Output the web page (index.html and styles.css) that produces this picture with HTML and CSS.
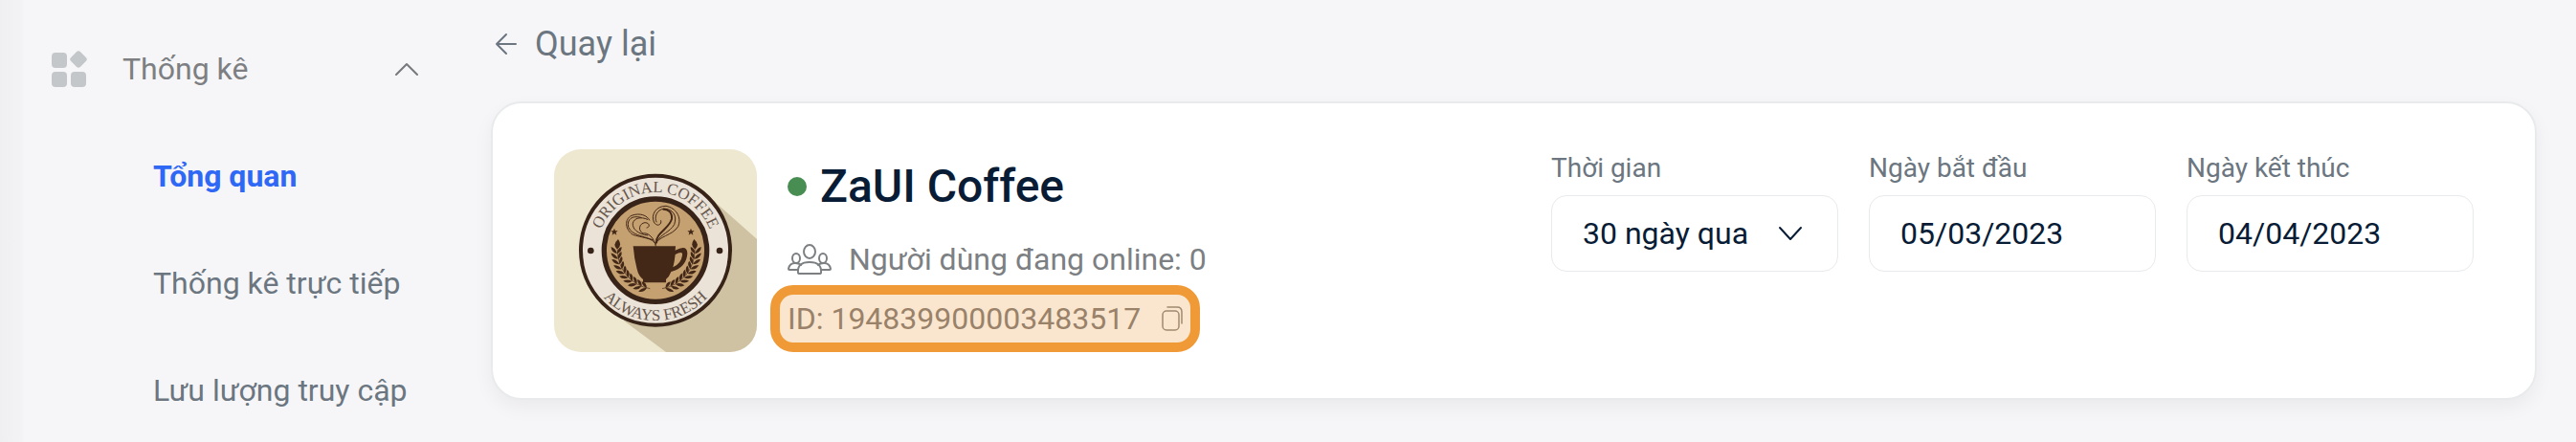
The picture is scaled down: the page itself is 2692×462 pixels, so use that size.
FILE: index.html
```html
<!DOCTYPE html>
<html lang="vi">
<head>
    <meta charset="UTF-8">
    <meta name="viewport" content="width=device-width, initial-scale=1.0">
    <title>ZaUI Coffee - Tổng quan</title>
    <link rel="stylesheet" href="styles.css">
</head>
<body>

    <!-- Sidebar -->
    <nav class="sidebar">
        <button type="button" class="menu-toggle" aria-expanded="true">
            <svg class="menu-icon" width="38" height="38" viewBox="0 0 38 38" fill="#c3c7ca">
                <rect x="0" y="2" width="16" height="16" rx="4"/>
                <rect x="21" y="2" width="14" height="14" rx="3" transform="rotate(45 28 9)"/>
                <rect x="0" y="22" width="16" height="16" rx="4"/>
                <rect x="20" y="22" width="16" height="16" rx="4"/>
            </svg>
            <span class="menu-label">Thống kê</span>
            <svg width="26" height="16" viewBox="0 0 26 16" fill="none" stroke="#77797c" stroke-width="2" stroke-linecap="round" stroke-linejoin="round">
                <path d="M2 14 L13 3 L24 14"/>
            </svg>
        </button>
        <a href="#overview" class="menu-link active">Tổng quan</a>
        <a href="#realtime" class="menu-link">Thống kê trực tiếp</a>
        <a href="#traffic" class="menu-link">Lưu lượng truy cập</a>
    </nav>

    <!-- Main content -->
    <main class="content">
        <a href="#back" class="back-link">
            <svg width="24" height="24" viewBox="0 0 24 24" fill="none" stroke="#6b7680" stroke-width="2" stroke-linecap="round" stroke-linejoin="round">
                <path d="M22 12 H2 M12 2 L2 12 L12 22"/>
            </svg>
            <span>Quay lại</span>
        </a>

        <section class="app-card">
            <svg class="app-logo" viewBox="57 48 636 636" role="img" aria-label="Original Coffee">
                <defs>
                    <path id="topArc" d="M193 365 A182 182 0 0 1 557 365"/>
                    <path id="bottomArc" d="M155 365 A220 220 0 0 0 595 365"/>
                    <g id="leaf">
                        <path d="M254 365 Q237 360 237 342 Q252 348 254 365 Z"/>
                        <path d="M254 365 Q256 349 270 345 Q271 360 254 365 Z"/>
                    </g>
                    <g id="branch">
                        <path d="M255 362 Q238 348 258 330 Q272 350 255 362 Z"/>
                        <use href="#leaf" transform="rotate(-5 375 365)"/>
                        <use href="#leaf" transform="rotate(-13 375 365)"/>
                        <use href="#leaf" transform="rotate(-21 375 365)"/>
                        <use href="#leaf" transform="rotate(-29 375 365)"/>
                        <use href="#leaf" transform="rotate(-37 375 365)"/>
                        <use href="#leaf" transform="rotate(-45 375 365)"/>
                        <use href="#leaf" transform="rotate(-53 375 365)"/>
                        <use href="#leaf" transform="rotate(-61 375 365)"/>
                        <use href="#leaf" transform="rotate(-69 375 365)"/>
                        <use href="#leaf" transform="rotate(-77 375 365)"/>
                        <path d="M256 362 A121 121 0 0 0 358 485" fill="none" stroke="#432818" stroke-width="2"/>
                    </g>
                    <path id="star" d="M0 -11 L3 -3 L11 -3 L5 2 L7 10 L0 5 L-7 10 L-5 2 L-11 -3 L-3 -3 Z"/>
                </defs>
                <rect x="57" y="48" width="636" height="636" fill="#ede8cf"/>
                <path d="M560 212 L693 330 V684 H408 L275 585 Z" fill="#cfc2a3"/>

                <circle cx="375" cy="365" r="234" fill="#ebe2d8" stroke="#382318" stroke-width="12"/>
                <circle cx="375" cy="365" r="161" fill="#c5a070" stroke="#382318" stroke-width="16"/>
                <circle cx="172" cy="366" r="10" fill="#382318"/>
                <circle cx="576" cy="366" r="10" fill="#382318"/>
                <text class="logo-text"><textPath href="#topArc" startOffset="50%">ORIGINAL COFFEE</textPath></text>
                <text class="logo-text"><textPath href="#bottomArc" startOffset="50%">ALWAYS FRESH</textPath></text>

                <g fill="#432818">
                    <use href="#star" x="246" y="307"/>
                    <use href="#star" x="486" y="307"/>
                    <use href="#branch"/>
                    <use href="#branch" transform="translate(754 0) scale(-1 1)"/>
                    <path d="M305 352 H438 L437 365 Q474 345 475 374 Q473 418 424 432 Q418 448 408 456 V466 H336 V456 Q322 446 317 424 Q308 390 305 352 Z"/>
                </g>
                <path d="M437 378 Q462 364 459 381 Q455 407 430 418 Q435 398 437 378 Z" fill="#c5a070"/>

                <!-- steam -->
                <g fill="none" stroke="#432818" stroke-width="3" stroke-linecap="round">
                    <path d="M376 352 C372 325 350 308 336 312 C318 302 325 280 342 278 C356 278 360 292 348 294"/>
                    <path d="M374 343 C366 326 330 325 304 316 C280 300 276 268 300 256 C326 246 350 256 356 270"/>
                    <path d="M366 332 C330 318 302 318 290 292 C284 268 302 254 330 262"/>
                    <path d="M350 318 C320 314 302 298 304 280 C308 264 328 258 350 268"/>
                    <path d="M376 346 C382 320 428 320 446 290 C458 262 440 232 408 226 C376 226 360 254 370 276 C378 292 396 286 392 272"/>
                    <path d="M380 336 C392 314 420 308 434 284 C444 254 428 236 402 234 C378 238 370 262 378 276"/>
                    <path d="M378 340 C376 310 420 296 426 266 C428 246 414 236 400 236" stroke-width="6"/>
                </g>
            </svg>

            <div class="app-info">
                <h1 class="app-name"><span class="status-dot"></span>ZaUI Coffee</h1>
                <div class="online-row">
                    <svg width="46" height="32" viewBox="0 0 46 32" fill="none" stroke="#7d8083" stroke-width="2" stroke-linecap="round" stroke-linejoin="round">
                        <ellipse cx="23" cy="8" rx="6" ry="7"/>
                        <path d="M11 30 Q10 19 23 19 Q36 19 35 30 Q35 31 33 31 H13 Q11 31 11 30 Z"/>
                        <ellipse cx="9" cy="15" rx="4" ry="5"/>
                        <path d="M11 27 H2 Q1 27 1 26 Q2 20 8 20 Q12 20 14 22"/>
                        <ellipse cx="37" cy="15" rx="4" ry="5"/>
                        <path d="M35 27 H44 Q45 27 45 26 Q44 20 38 20 Q34 20 32 22"/>
                    </svg>
                    <span>Người dùng đang online: 0</span>
                </div>
                <div class="id-row">
                    <span>ID: 194839900003483517</span>
                    <button type="button" class="copy-btn" aria-label="Sao chép ID">
                        <svg width="22" height="26" viewBox="0 0 22 26" fill="none" stroke="#a08a70" stroke-width="1.5" stroke-linecap="round">
                            <rect x="1" y="5" width="17" height="20" rx="4"/>
                            <path d="M6 1 H16 Q21 1 21 6 V18"/>
                        </svg>
                    </button>
                </div>
            </div>

            <form class="filters">
                <div class="field">
                    <label for="period">Thời gian</label>
                    <div class="select-wrap">
                        <select id="period">
                            <option>30 ngày qua</option>
                            <option>7 ngày qua</option>
                        </select>
                        <svg class="select-arrow" width="26" height="16" viewBox="0 0 26 16" fill="none" stroke="#081c36" stroke-width="2" stroke-linecap="round" stroke-linejoin="round">
                            <path d="M2 2 L13 14 L24 2"/>
                        </svg>
                    </div>
                </div>
                <div class="field">
                    <label for="startDate">Ngày bắt đầu</label>
                    <input type="text" id="startDate" value="05/03/2023">
                </div>
                <div class="field">
                    <label for="endDate">Ngày kết thúc</label>
                    <input type="text" id="endDate" value="04/04/2023">
                </div>
            </form>
        </section>
    </main>

</body>
</html>
```
FILE: styles.css
```css
* {
    box-sizing: border-box;
}

body {
    font-family: Roboto, "Noto Sans", sans-serif;
    font-size: 32px;
    background-color: #f6f6f9;
    color: #081c36;
    margin: 0;
    display: flex;
    min-height: 100vh;
}

a {
    text-decoration: none;
}

button {
    font: inherit;
    background: none;
    border: none;
    padding: 0;
    cursor: pointer;
}

svg {
    display: block;
    flex-shrink: 0;
}

/* Sidebar */
.sidebar {
    flex: 0 0 513px;
    display: flex;
    flex-direction: column;
    gap: 64px;
    padding: 48px 75px 0 54px;
    background: linear-gradient(to right, #efeff1, #f3f3f5 23px, #f6f6f9 25px);
}

.menu-toggle {
    display: flex;
    align-items: center;
    height: 48px;
    line-height: 48px;
    color: #7d7f82;
}

.menu-label {
    flex: 1;
    margin-left: 36px;
    text-align: left;
}

.menu-link {
    margin-left: 106px;
    line-height: 48px;
    color: #6b7680;
    white-space: nowrap;
}

.menu-link.active {
    color: #2f68f5;
    font-weight: 700;
}

/* Main content */
.content {
    flex: 1;
    min-width: 0;
    padding: 22px 41px 0 0;
}

.back-link {
    display: flex;
    align-items: center;
    gap: 18px;
    width: fit-content;
    margin-left: 4px;
    font-size: 36px;
    line-height: 48px;
    color: #6b7680;
}

.app-card {
    display: flex;
    align-items: flex-start;
    margin-top: 36px;
    padding: 48px 64px;
    background-color: white;
    border: 2px solid #e9eaec;
    border-radius: 32px;
    box-shadow: 0 8px 20px rgba(0, 0, 0, 0.05);
}

.app-logo {
    width: 212px;
    height: 212px;
    border-radius: 28px;
}

.logo-text {
    font-family: "Liberation Serif", serif;
    font-size: 50px;
    fill: #65564b;
    text-anchor: middle;
}

.app-info {
    display: flex;
    flex-direction: column;
    align-items: flex-start;
    gap: 22px;
    margin-left: 32px;
    padding-top: 5px;
    line-height: 40px;
    color: #7d8083;
    white-space: nowrap;
}

.app-name {
    display: flex;
    align-items: center;
    gap: 14px;
    margin: 0;
    font-size: 48px;
    font-weight: 500;
    line-height: 68px;
    color: #081c36;
}

.status-dot {
    width: 20px;
    height: 20px;
    border-radius: 50%;
    background-color: #488d52;
}

.online-row {
    display: flex;
    align-items: center;
    gap: 18px;
}

.id-row {
    position: relative;
    display: flex;
    align-items: center;
    gap: 22px;
    color: #998269;
}

/* Highlight box around the ID */
.id-row::before {
    content: "";
    position: absolute;
    inset: -15px -18px;
    background-color: #fae6ce;
    border: 10px solid #ef9a36;
    border-radius: 24px;
}

.id-row > * {
    position: relative;
}

/* Filters */
.filters {
    display: flex;
    gap: 32px;
    margin-left: auto;
}

.field {
    display: flex;
    flex-direction: column;
    gap: 8px;
    width: 300px;
}

.field label {
    font-size: 28px;
    line-height: 40px;
    color: #6b7680;
}

.field input,
.field select {
    width: 100%;
    height: 80px;
    padding: 0 32px;
    font: inherit;
    color: #081c36;
    background-color: white;
    border: 1px solid #e9eaec;
    border-radius: 16px;
    appearance: none;
}

.select-wrap {
    position: relative;
}

.select-arrow {
    position: absolute;
    right: 37px;
    top: 32px;
    pointer-events: none;
}
```
